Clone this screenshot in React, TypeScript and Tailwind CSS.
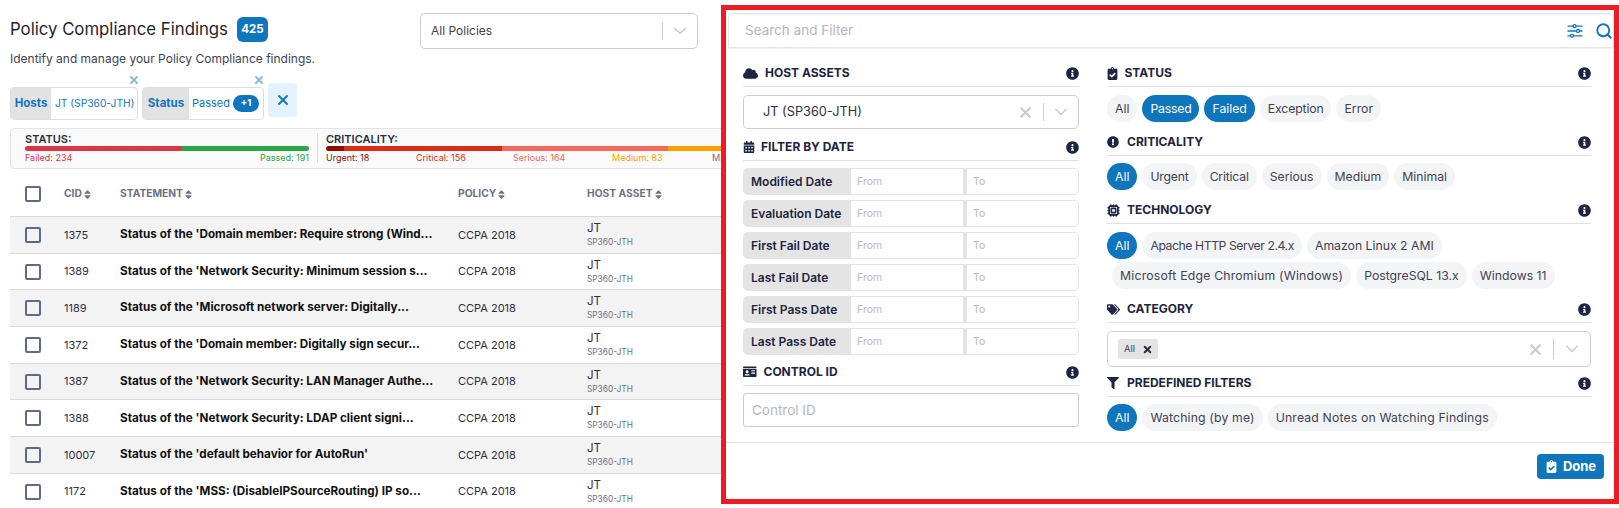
import React from "react";
import { ChevronDown, X, Search, Cpu } from "lucide-react";
import {
  FaCloud, FaCalendarAlt, FaIdCard, FaClipboardCheck, FaExclamationCircle,
  FaTags, FaFilter, FaInfoCircle, FaSort,
} from "react-icons/fa";

const rows = [
  ["1375", "Status of the 'Domain member: Require strong (Wind..."],
  ["1389", "Status of the 'Network Security: Minimum session s..."],
  ["1189", "Status of the 'Microsoft network server: Digitally..."],
  ["1372", "Status of the 'Domain member: Digitally sign secur..."],
  ["1387", "Status of the 'Network Security: LAN Manager Authe..."],
  ["1388", "Status of the 'Network Security: LDAP client signi..."],
  ["10007", "Status of the 'default behavior for AutoRun'"],
  ["1172", "Status of the 'MSS: (DisableIPSourceRouting) IP so..."],
];

function Heading({ icon, title, className, gap }: { icon: React.ReactNode; title: string; className: string; gap: string }) {
  return (
    <div className={`flex h-[27px] items-center justify-between border-b border-[#e2e2e2] ${className}`}>
      <div className={`flex items-center ${gap} text-[#1c2541]`}>
        {icon}
        <span className="text-[12px] font-bold">{title}</span>
      </div>
      <FaInfoCircle className="text-[13px] text-[#1c2541]" />
    </div>
  );
}

function Pill({ label, active, cls = "" }: { label: string; active?: boolean; cls?: string }) {
  return (
    <span className={`ml-[5px] flex h-[27px] items-center rounded-full px-[8px] pt-px text-[12.25px] first:ml-0 ${cls} ${active ? "bg-[#0f75bc] text-white" : "bg-[#f3f4f6] text-[#3f4254]"}`}>
      {label}
    </span>
  );
}

function DateRow({ label }: { label: string }) {
  return (
    <div className="flex h-[27px] overflow-hidden rounded-[5px] border border-[#e4e4e4] bg-[#e4e4e4]">
      <span className="flex w-[107px] items-center pl-[7px] text-[12px] font-semibold text-[#1c2541]">{label}</span>
      <span className="flex w-[112px] items-center bg-white pl-[6px] text-[10.5px] text-[#b5b5c3]">From</span>
      <span className="ml-[4px] flex flex-1 items-center bg-white pl-[6px] text-[10.5px] text-[#b5b5c3]">To</span>
    </div>
  );
}

function Sliders() {
  return (
    <svg viewBox="0 0 16 14" className="mr-[12px] ml-auto h-[14px] w-[16px]" fill="none" stroke="#0f75bc" strokeWidth="1.3">
      <path d="M0.5 2.2H15.5M0.5 7H15.5M0.5 11.8H15.5" />
      <circle cx="7.5" cy="2.2" r="1.5" fill="#ffffff" />
      <circle cx="11" cy="7" r="1.5" fill="#ffffff" />
      <circle cx="5" cy="11.8" r="1.5" fill="#ffffff" />
    </svg>
  );
}

export default function App() {
  return (
    <div className="flex h-[508px] w-[1619px] overflow-hidden bg-white font-['Inter','Noto_Sans',sans-serif]">
      <div className="h-[508px] w-[721px] shrink-0 overflow-hidden">
        <div className="flex h-[49px] items-start pr-[23px] pl-[10px] pt-[13px]">
          <div className="flex h-[33px] items-center gap-[9px]">
            <h1 className="text-[16.75px] font-normal whitespace-nowrap text-[#1f2430]">Policy Compliance Findings</h1>
            <span className="flex h-[25px] w-[31px] items-center justify-center rounded-[6px] bg-[#0f75bc] text-[11.5px] font-bold text-white">425</span>
          </div>
          <div className="ml-auto flex h-[36px] w-[278px] items-center rounded-[5px] border border-[#cccccc] pl-[10px]">
            <span className="text-[12px] text-[#3f4254]">All Policies</span>
            <span className="ml-auto h-[18px] w-px bg-[#cccccc]" />
            <ChevronDown className="mx-[7px] h-[20px] w-[20px] text-[#cccccc]" />
          </div>
        </div>

        <p className="mt-px h-[18px] pl-[10px] text-[12px] leading-[18px] text-[#3f4254]">Identify and manage your Policy Compliance findings.</p>

        <div className="relative mt-[15px] flex h-[37px] items-start gap-[4px] pl-[10px]">
          <div className="relative mt-[4px] flex h-[33px] w-[128px] overflow-hidden rounded-[4px] border border-[#dddddd]">
            <span className="flex w-[40px] items-center justify-center bg-[#e2e2e2] text-[11.5px] font-bold text-[#0f75bc]">Hosts</span>
            <span className="flex flex-1 items-center pl-[4px] text-[10.25px] whitespace-nowrap text-[#0f75bc]">JT (SP360-JTH)</span>
          </div>
          <div className="mt-[4px] flex h-[33px] w-[122px] overflow-hidden rounded-[4px] border border-[#dddddd]">
            <span className="flex w-[46px] items-center justify-center bg-[#e2e2e2] text-[11.5px] font-bold text-[#0f75bc]">Status</span>
            <span className="flex flex-1 items-center pl-[3px] text-[11px] text-[#0f75bc]">
              Passed
              <span className="ml-[3px] flex h-[17px] w-[26px] items-center justify-center rounded-full bg-[#0f75bc] text-[9.5px] font-bold text-white">+1</span>
            </span>
          </div>
          <div className="flex h-[34px] w-[29px] items-center justify-center rounded-[4px] bg-[#e3f2fd] text-[#0f75bc]">
            <X className="h-[16px] w-[16px]" strokeWidth={2.8} />
          </div>
          <X className="absolute top-[-9px] left-[128px] h-[12px] w-[12px] text-[#8db9dc]" strokeWidth={4} />
          <X className="absolute top-[-9px] left-[253px] h-[12px] w-[12px] text-[#8db9dc]" strokeWidth={4} />
        </div>

        <div className="mt-[8px] ml-[10px] flex h-[41px] w-[730px] rounded-[4px] border border-[#e4e4e4] bg-[#fafafa] pt-[4px]">
          <div className="ml-[14px] w-[284px] shrink-0">
            <div className="text-[11px] leading-[12px] font-semibold text-[#2b2f3f]">STATUS:</div>
            <div className="mt-[1px] flex h-[5px] overflow-hidden rounded-full">
              <div className="w-[157px] bg-[#dc3545]" />
              <div className="flex-1 bg-[#28a745]" />
            </div>
            <div className="mt-[1px] flex justify-between text-[9px] leading-[11px]">
              <span className="text-[#dc3545]">Failed: 234</span>
              <span className="text-[#28a745]">Passed: 191</span>
            </div>
          </div>
          <div className="mx-[8px] h-[30px] w-px shrink-0 bg-[#dddddd]" />
          <div className="flex-1">
            <div className="text-[11px] leading-[12px] font-semibold text-[#2b2f3f]">CRITICALITY:</div>
            <div className="mt-[1px] flex h-[5px] overflow-hidden rounded-l-full">
              <div className="w-[18px] bg-[#8b1000]" />
              <div className="w-[158px] bg-[#d92e15]" />
              <div className="w-[166px] bg-[#f4695a]" />
              <div className="flex-1 bg-[#ff9f00]" />
            </div>
            <div className="mt-[1px] flex text-[9px] leading-[11px] whitespace-nowrap">
              <span className="w-[90px] text-[#8b1000]">Urgent: 18</span>
              <span className="w-[97px] text-[#d92e15]">Critical: 156</span>
              <span className="w-[99px] text-[#f4695a]">Serious: 164</span>
              <span className="w-[100px] text-[#ff9f00]">Medium: 83</span>
              <span className="text-[#6c7293]">Minimal</span>
            </div>
          </div>
        </div>

        <div className="ml-[10px] flex h-[48px] items-center border-b border-[#d8d8de] pt-[3px] text-[10.25px] font-bold text-[#6b7085]">
          <span className="ml-[15px] h-[16px] w-[16px] rounded-[2px] border-2 border-[#5c6b8a]" />
          <span className="ml-[23px] flex w-[56px] items-center">CID<FaSort className="text-[11px]" /></span>
          <span className="flex w-[338px] items-center">STATEMENT<FaSort className="text-[11px]" /></span>
          <span className="flex w-[129px] items-center">POLICY<FaSort className="text-[11px]" /></span>
          <span className="flex items-center whitespace-nowrap">HOST ASSET<FaSort className="text-[11px]" /></span>
        </div>
        {rows.map(([cid, st], i) => (
          <div key={cid} className={`ml-[10px] flex h-[36.7px] items-center border-b border-[#d8d8de] ${i % 2 === 0 ? "bg-[#f3f3f3]" : "bg-white"}`}>
            <span className="ml-[15px] h-[16px] w-[16px] rounded-[2px] border-2 border-[#5c6b8a]" />
            <span className="ml-[23px] w-[56px] text-[11px] text-[#2b2f3f]">{cid}</span>
            <span className="w-[338px] text-[11.7px] font-bold whitespace-nowrap text-[#111111]">{st}</span>
            <span className="w-[129px] text-[11px] text-[#2b2f3f]">CCPA 2018</span>
            <span className="flex flex-col">
              <span className="text-[11.5px] leading-[15px] text-[#2b2f3f]">JT</span>
              <span className="text-[8.3px] leading-[13px] text-[#6b7085]">SP360-JTH</span>
            </span>
          </div>
        ))}
      </div>

      <div className="mt-[5px] h-[499px] w-[898px] shrink-0 border-[5px] border-[#ed1c24] bg-white">
        <div className="ml-[2px] mt-[3px] flex h-[35px] items-center rounded-t-[4px] border border-[#e6e6e6] pl-[16px] shadow-[0_1px_1px_rgba(0,0,0,0.06)]">
          <span className="text-[13.5px] text-[#b5b5c3]">Search and Filter</span>
          <Sliders />
          <Search className="h-[18px] w-[18px] text-[#0f75bc]" strokeWidth={2.5} />
        </div>

        <div className="flex h-[395px] gap-[28px] border-b border-[#e6e6e6] pt-[12px] pl-[17px]">
          <div className="w-[336px] shrink-0">
            <Heading icon={<FaCloud className="text-[15px]" />} gap="gap-[7px]" title="HOST ASSETS" className="mb-[8px]" />
            <div className="flex h-[34px] items-center rounded-[5px] border border-[#cccccc] pl-[19px]">
              <span className="text-[12.75px] text-[#2b2f3f]">JT (SP360-JTH)</span>
              <X className="mr-[9px] ml-auto h-[17px] w-[17px] text-[#cccccc]" strokeWidth={3.2} />
              <span className="h-[18px] w-px bg-[#cccccc]" />
              <ChevronDown className="mx-[7px] h-[20px] w-[20px] text-[#cccccc]" />
            </div>
            <Heading icon={<FaCalendarAlt className="text-[12px]" />} gap="gap-[6px]" title="FILTER BY DATE" className="mt-[5px] mb-[7px]" />
            <div className="flex flex-col gap-[5px]">
              {["Modified Date", "Evaluation Date", "First Fail Date", "Last Fail Date", "First Pass Date", "Last Pass Date"].map((d) => (
                <DateRow key={d} label={d} />
              ))}
            </div>
            <Heading icon={<FaIdCard className="text-[13.5px]" />} gap="gap-[7px]" title="CONTROL ID" className="mt-[4px] mb-[7px]" />
            <div className="flex h-[34px] items-center rounded-[3px] border border-[#cccccc] pl-[8px] text-[13.5px] text-[#b5b5c3]">Control ID</div>
          </div>

          <div className="w-[484px] shrink-0">
            <Heading icon={<FaClipboardCheck className="ml-[-1.5px] text-[13px]" />} gap="gap-[6px]" title="STATUS" className="mb-[8px]" />
            <div className="flex flex-wrap">
              <Pill label="All" />
              <Pill label="Passed" active cls="tracking-[-0.2px]" />
              <Pill label="Failed" active />
              <Pill label="Exception" cls="tracking-[-0.15px]" />
              <Pill label="Error" />
            </div>
            <Heading icon={<FaExclamationCircle className="text-[12px]" />} gap="gap-[8px]" title="CRITICALITY" className="mt-[7px] mb-[7px]" />
            <div className="flex flex-wrap">
              <Pill label="All" active />
              <Pill label="Urgent" cls="tracking-[-0.2px]" />
              <Pill label="Critical" cls="tracking-[-0.2px]" />
              <Pill label="Serious" />
              <Pill label="Medium" />
              <Pill label="Minimal" />
            </div>
            <Heading icon={<Cpu className="h-[13px] w-[13px]" strokeWidth={3} />} gap="gap-[7px]" title="TECHNOLOGY" className="mt-[7px] mb-[8px]" />
            <div className="flex flex-wrap gap-y-[3px]">
              <Pill label="All" active />
              <Pill label="Apache HTTP Server 2.4.x" cls="tracking-[-0.45px]" />
              <Pill label="Amazon Linux 2 AMI" />
              <Pill label="Microsoft Edge Chromium (Windows)" cls="tracking-[0.2px]" />
              <Pill label="PostgreSQL 13.x" />
              <Pill label="Windows 11" />
            </div>
            <Heading icon={<FaTags className="text-[13px]" />} gap="gap-[7px]" title="CATEGORY" className="mt-[7px] mb-[8px]" />
            <div className="flex h-[36px] items-center rounded-[5px] border border-[#cccccc] pl-[10px]">
              <span className="flex h-[20px] w-[40px] items-center gap-[7px] rounded-[2px] bg-[#e4e4e4] pl-[6px] text-[9.5px] text-[#3f4254]">
                All
                <X className="h-[11px] w-[11px] text-[#2b2f3f]" strokeWidth={4.5} />
              </span>
              <X className="mr-[9px] ml-auto h-[17px] w-[17px] text-[#cccccc]" strokeWidth={3.2} />
              <span className="h-[20px] w-px bg-[#cccccc]" />
              <ChevronDown className="mx-[8px] h-[20px] w-[20px] text-[#cccccc]" />
            </div>
            <Heading icon={<FaFilter className="text-[12px]" />} gap="gap-[8px]" title="PREDEFINED FILTERS" className="mt-[3px] mb-[7px]" />
            <div className="flex flex-wrap">
              <Pill label="All" active />
              <Pill label="Watching (by me)" cls="tracking-[0.15px]" />
              <Pill label="Unread Notes on Watching Findings" cls="tracking-[0.15px]" />
            </div>
          </div>
        </div>

        <div className="flex justify-end pt-[11px] pr-[10px]">
          <span className="flex h-[25px] w-[67px] items-center justify-center gap-[5px] rounded-[4px] bg-[#0f75bc] text-[13px] font-bold text-white">
            <FaClipboardCheck className="text-[13px]" />
            Done
          </span>
        </div>
      </div>
    </div>
  );
}
